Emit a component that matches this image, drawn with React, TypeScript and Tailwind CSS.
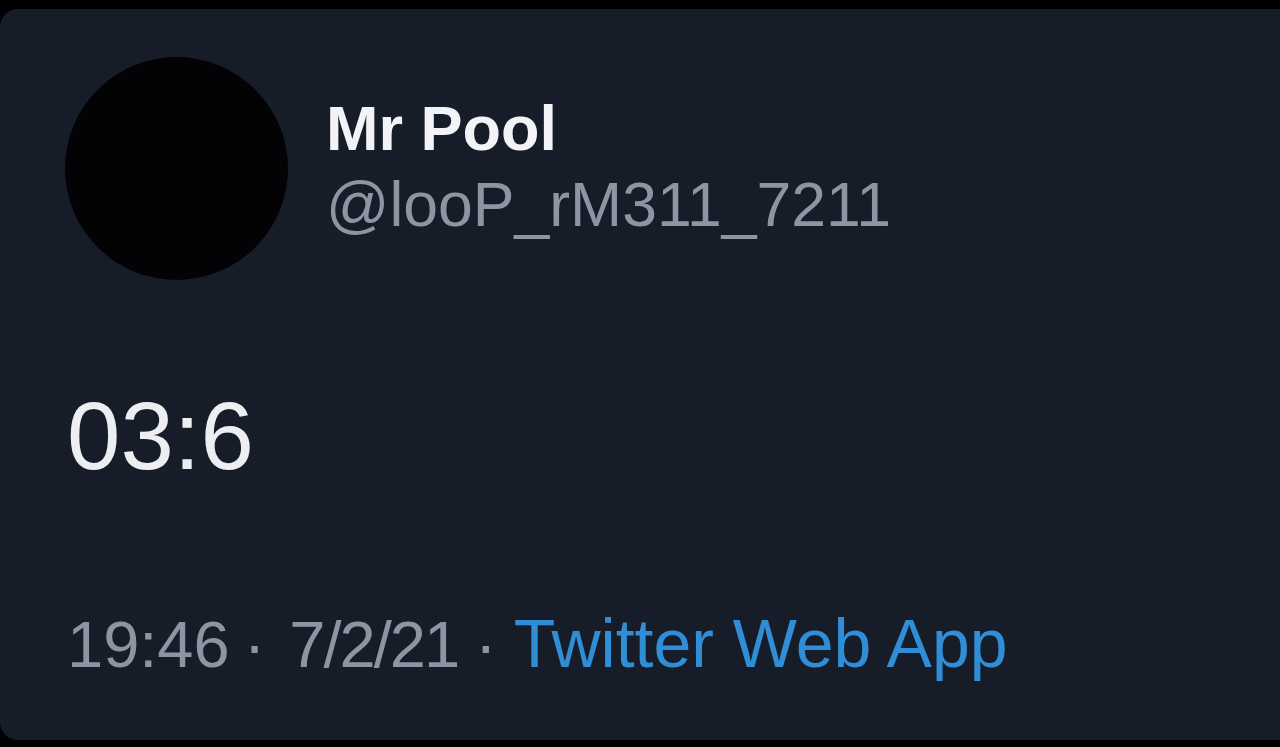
export default function App() {
  return (
    <main className="w-[1280px] h-[747px] overflow-hidden bg-black pt-[9px] font-['Liberation_Sans',Arial,sans-serif]">
      {/* Tweet card */}
      <div className="w-[1310px] h-[731px] bg-[#161d29] rounded-[18px] pt-[48px] pl-[65px]">
        <div className="flex items-center gap-[38px]">
          <div className="w-[223px] h-[223px] rounded-full bg-[#030205] shrink-0"></div>
          <div className="flex flex-col pb-[6px]">
            <span className="text-[63px] leading-[76px] font-bold text-[#f2f3f5]">Mr Pool</span>
            <span className="text-[62.5px] leading-[76px] text-[#8c96a3]">@looP_rM311_7211</span>
          </div>
        </div>

        <p className="mt-[108px] pl-[2px] text-[96px] leading-[96px] text-[#eceef1]">03:6</p>

        <div className="mt-[127px] pl-[2px] flex items-baseline leading-[64px] whitespace-nowrap text-[#8c96a3]">
          <span className="text-[65px]">19:46</span>
          <span className="text-[65px] ml-[14px]">·</span>
          <span className="text-[65px] ml-[24px] tracking-[-2px]">7/2/21</span>
          <span className="text-[65px] ml-[17px]">·</span>
          <span className="text-[68px] ml-[17px] text-[#2f8ed6]">Twitter Web App</span>
        </div>
      </div>
    </main>
  )
}
